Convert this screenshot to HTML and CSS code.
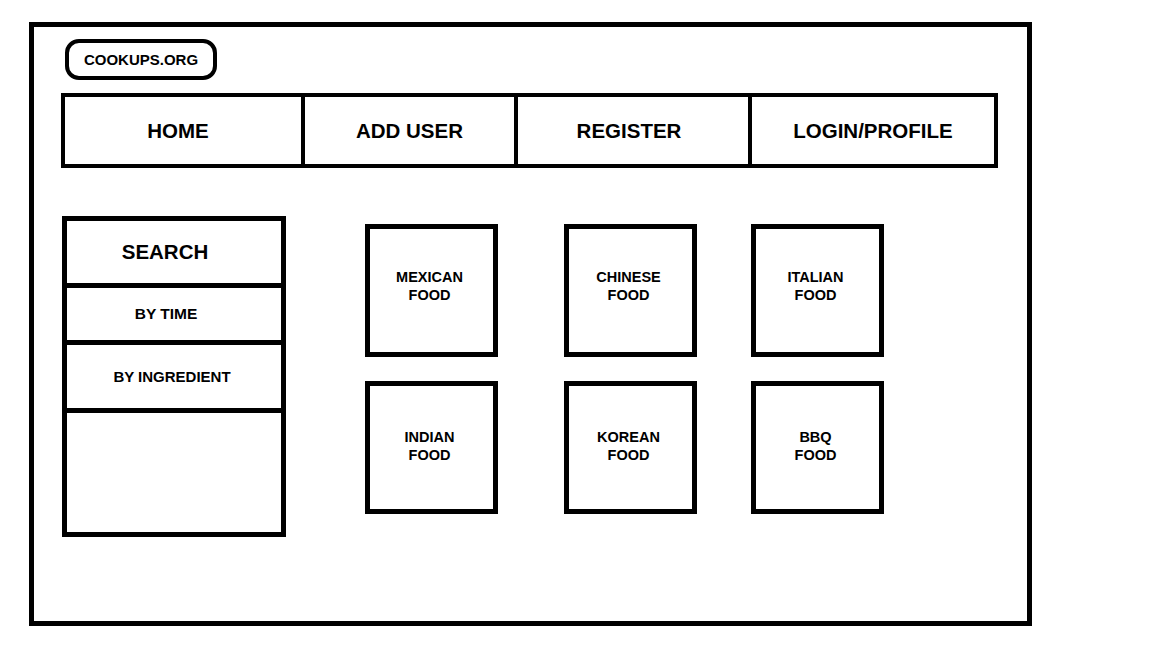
FILE: index.html
```html
<!DOCTYPE html>
<html lang="en">
<head>
    <meta charset="UTF-8">
    <meta name="viewport" content="width=device-width, initial-scale=1.0">
    <title>Cookups.org</title>
    <link rel="stylesheet" href="styles.css">
</head>
<body>
    <div class="frame">
        <header>
            <div class="logo">COOKUPS.ORG</div>
            <nav>
                <a href="#" class="nav-item nav-home">HOME</a>
                <a href="#" class="nav-item">ADD USER</a>
                <a href="#" class="nav-item nav-register">REGISTER</a>
                <a href="#" class="nav-item">LOGIN/PROFILE</a>
            </nav>
        </header>

        <main>
            <aside class="sidebar">
                <div class="side-row side-title">SEARCH</div>
                <div class="side-row side-time">BY TIME</div>
                <div class="side-row side-ingredient">BY INGREDIENT</div>
                <div class="side-row side-empty"></div>
            </aside>

            <section class="food-grid">
                <div class="food-card">MEXICAN<br>FOOD</div>
                <div class="food-card">CHINESE<br>FOOD</div>
                <div class="food-card">ITALIAN<br>FOOD</div>
                <div class="food-card low">INDIAN<br>FOOD</div>
                <div class="food-card low">KOREAN<br>FOOD</div>
                <div class="food-card low">BBQ<br>FOOD</div>
            </section>
        </main>
    </div>
</body>
</html>
```

FILE: styles.css
```css
* {
    margin: 0;
    padding: 0;
    box-sizing: border-box;
    font-family: 'Liberation Sans', Arial, sans-serif;
}

body {
    background-color: #fff;
    color: #000;
}

.frame {
    width: 1003px;
    height: 604px;
    margin: 22px 0 0 29px;
    border: 5px solid #000;
    padding: 12px 0 0 27px;
}

.logo {
    width: 152px;
    height: 41px;
    margin-left: 4px;
    border: 4px solid #000;
    border-radius: 14px;
    display: flex;
    align-items: center;
    justify-content: center;
    font-size: 15px;
    font-weight: 700;
}

nav {
    display: grid;
    grid-template-columns: 240px 213px 234px 242px;
    width: 937px;
    height: 75px;
    margin-top: 13px;
    border: 4px solid #000;
}

.nav-item {
    display: flex;
    align-items: center;
    justify-content: center;
    color: #000;
    text-decoration: none;
    font-size: 20.5px;
    font-weight: 700;
    border-right: 4px solid #000;
}

.nav-item:last-child {
    border-right: none;
}

.nav-home {
    padding: 0 10px 0 0;
}

.nav-register {
    padding: 0 8px 0 0;
}

main {
    display: flex;
    align-items: flex-start;
    margin-top: 48px;
}

.sidebar {
    width: 224px;
    height: 321px;
    margin-left: 1px;
    border: 5px solid #000;
    display: flex;
    flex-direction: column;
}

.side-row {
    display: flex;
    align-items: center;
    justify-content: center;
    font-weight: 700;
    font-size: 15.5px;
    border-bottom: 5px solid #000;
}

.side-title {
    height: 67px;
    font-size: 20.5px;
    padding-right: 18px;
}

.side-time {
    height: 57px;
    padding-right: 16px;
}

.side-ingredient {
    height: 68px;
    font-size: 15px;
    padding-right: 4px;
}

.side-empty {
    flex-grow: 1;
    border-bottom: none;
}

.food-grid {
    display: grid;
    grid-template-columns: repeat(3, 133px);
    column-gap: 60px;
    row-gap: 24px;
    margin: 8px 0 0 79px;
}

.food-card {
    width: 133px;
    height: 133px;
    border: 5px solid #000;
    display: flex;
    align-items: center;
    justify-content: center;
    text-align: center;
    font-size: 14.5px;
    font-weight: 700;
    line-height: 18px;
    padding: 0 4px 10px 0;
}

/* middle column sits a little to the right in the sketch */
.food-card:nth-child(3n+2) {
    margin-left: 6px;
}

.food-card.low {
    padding-bottom: 4px;
}
```
